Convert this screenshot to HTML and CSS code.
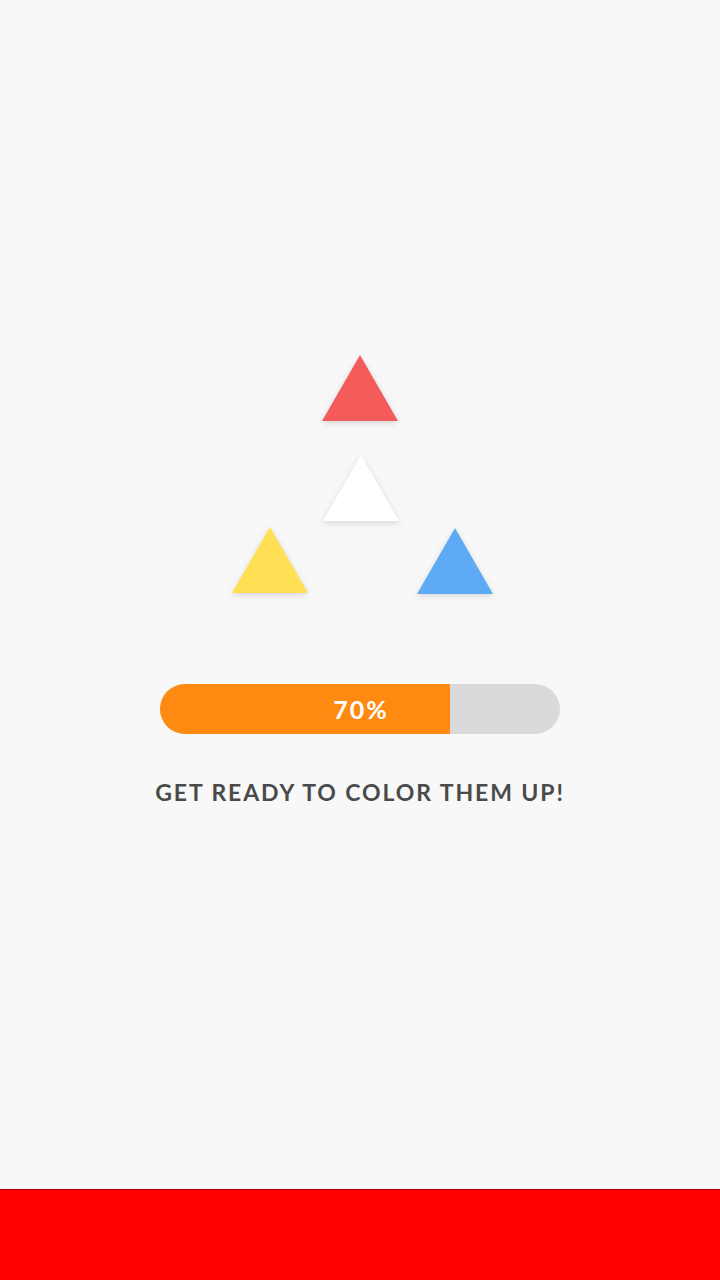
FILE: index.html
```html
<!DOCTYPE html>
<html>
<head>
<meta charset="utf-8">
<link rel="stylesheet" href="styles.css">
</head>
<body>
<main class="screen">
  <div class="stage">
    <svg class="tri tri-red" width="76" height="66" viewBox="0 0 76 66"><polygon points="38,0 76,66 0,66" fill="#f45b5b"/></svg>
    <svg class="tri tri-white" width="76" height="66" viewBox="0 0 76 66"><polygon points="38,0 76,66 0,66" fill="#ffffff"/></svg>
    <svg class="tri tri-yellow" width="76" height="66" viewBox="0 0 76 66"><polygon points="38,0 76,66 0,66" fill="#ffe055"/></svg>
    <svg class="tri tri-blue" width="76" height="66" viewBox="0 0 76 66"><polygon points="38,0 76,66 0,66" fill="#5eaaf5"/></svg>
  </div>
  <div class="progress">
    <div class="progress-fill" style="width: 290px"></div>
    <span class="progress-label">70%</span>
  </div>
  <p class="tagline">GET READY TO COLOR THEM UP!</p>
</main>
<footer class="banner"></footer>
</body>
</html>
```
FILE: styles.css
```css
html, body {
  margin: 0;
  padding: 0;
}
body {
  width: 720px;
  height: 1280px;
  background: #f8f8f8;
  font-family: "Lato", "DejaVu Sans", sans-serif;
  display: flex;
  flex-direction: column;
  overflow: hidden;
}
.screen {
  flex: 1;
  display: flex;
  flex-direction: column;
  align-items: center;
  padding-top: 350px;
}
.stage {
  position: relative;
  width: 720px;
  height: 250px;
}
.tri {
  position: absolute;
  display: block;
  filter: drop-shadow(0 2px 3px rgba(0, 0, 0, 0.14));
}
.tri-red { left: 322px; top: 5px; }
.tri-white { left: 323px; top: 105px; }
.tri-yellow { left: 232px; top: 177px; }
.tri-blue { left: 417px; top: 178px; }

.progress {
  position: relative;
  margin-top: 84px;
  width: 400px;
  height: 50px;
  border-radius: 25px;
  background: #dadada;
  overflow: hidden;
  display: flex;
  align-items: center;
  justify-content: center;
}
.progress-fill {
  position: absolute;
  left: 0;
  top: 0;
  bottom: 0;
  background: #ff8a12;
}
.progress-label {
  position: relative;
  color: #ffffff;
  font-weight: 700;
  font-size: 25px;
  letter-spacing: 2px;
  margin-left: 2px;
}
.tagline {
  margin: 40px 0 0;
  color: #4a4a4a;
  font-weight: 700;
  font-size: 23px;
  letter-spacing: 1.9px;
  line-height: 36px;
}
.banner {
  height: 91px;
  background: #ff0000;
  border-top: 1px solid #b00000;
  box-sizing: border-box;
}
```
